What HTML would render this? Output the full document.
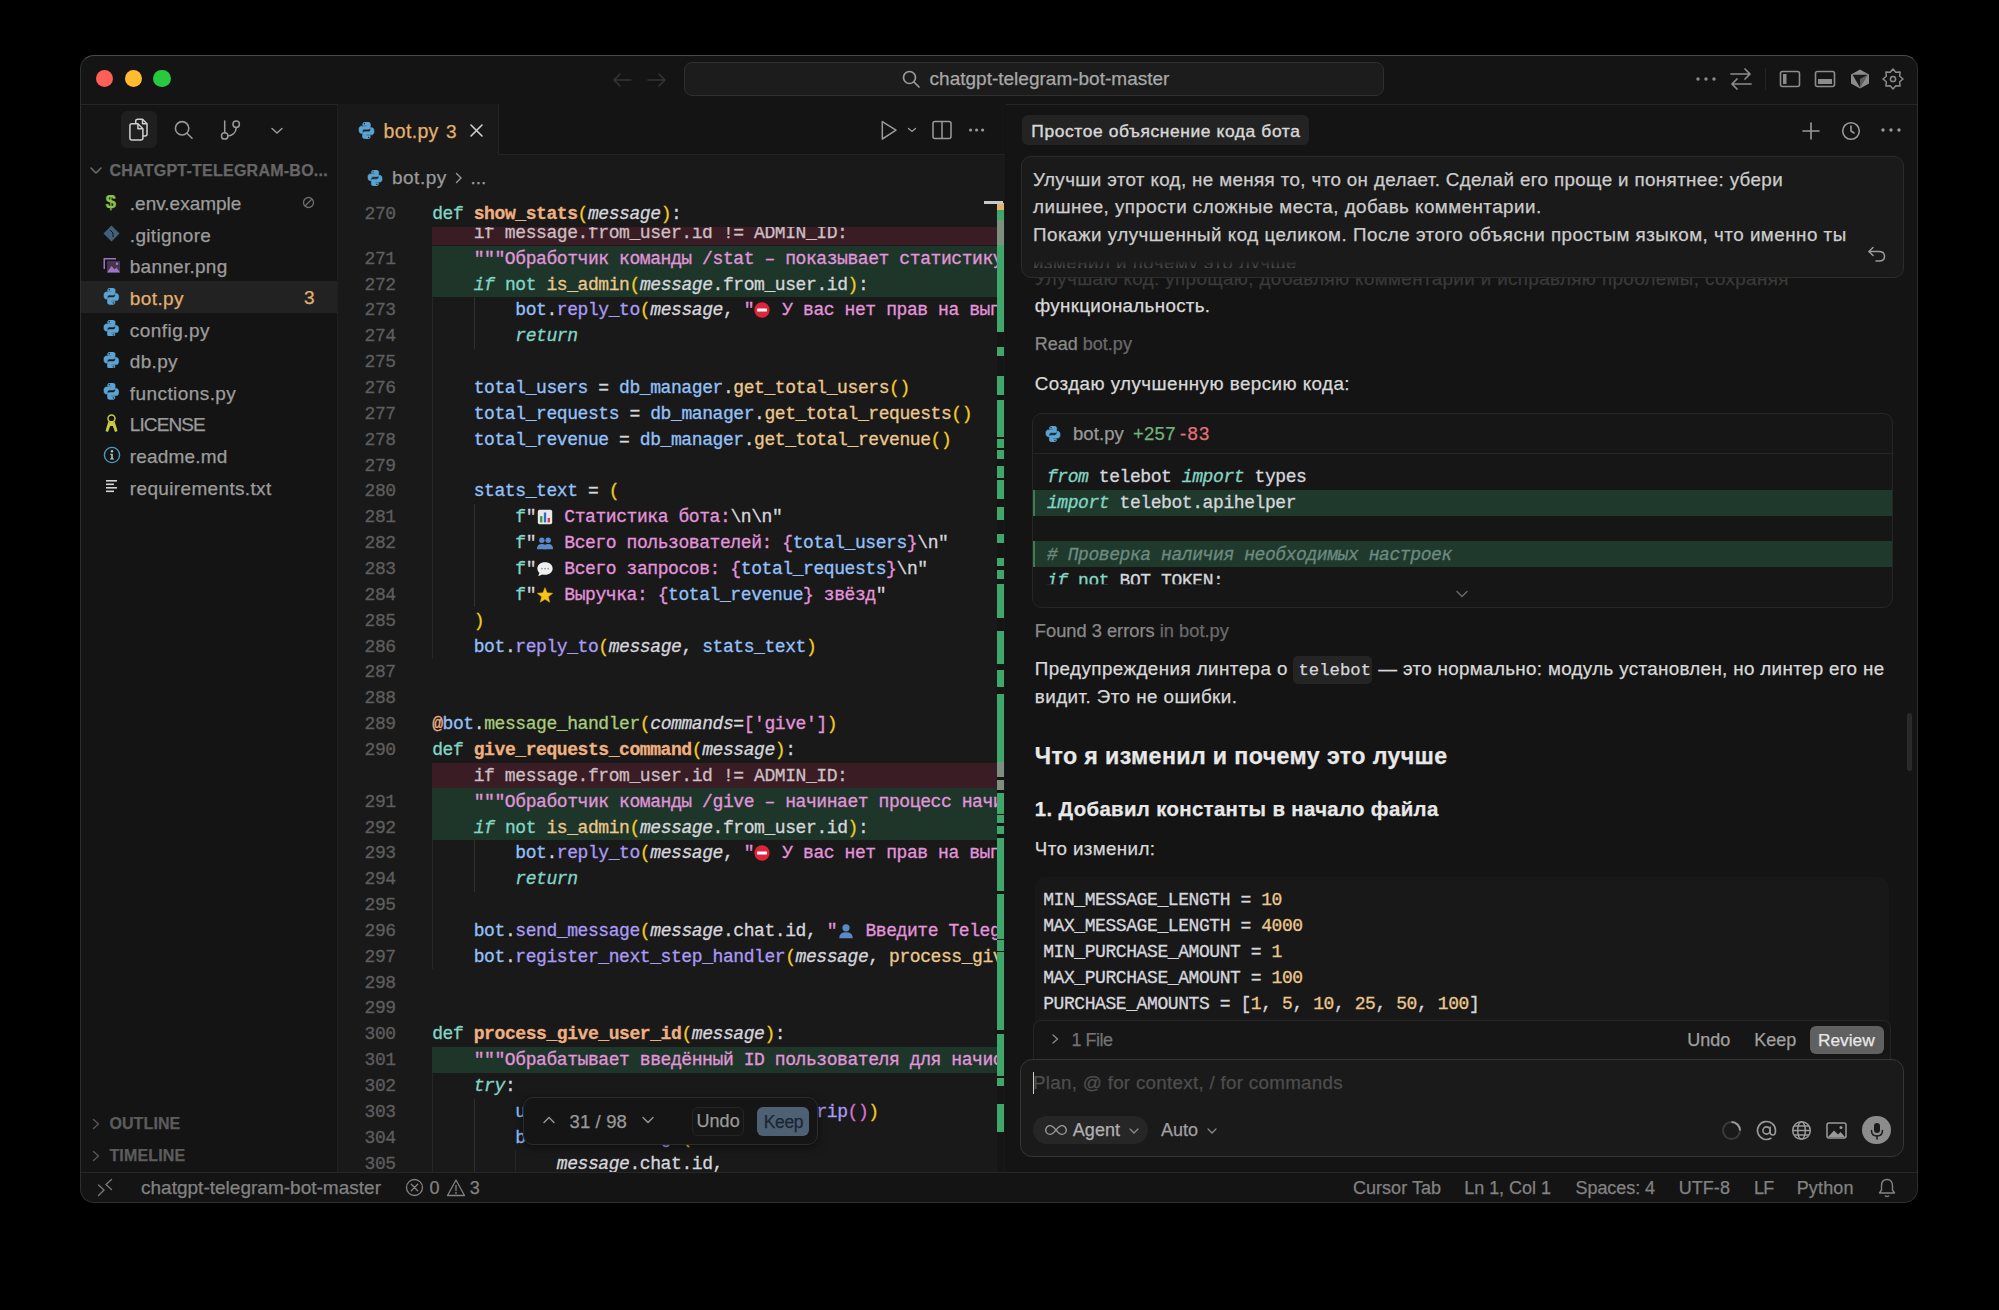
<!DOCTYPE html>
<html><head><meta charset="utf-8"><style>
*{margin:0;padding:0;box-sizing:border-box}
html,body{width:1999px;height:1310px;overflow:hidden;background:#000}
body{position:relative;font-family:"Liberation Sans",sans-serif}
div{-webkit-text-stroke:0.25px}
</style></head>
<body>
<div style="position:absolute;left:80.00px;top:55.00px;width:1838.00px;height:1148.00px;background:#141414;border-radius:14px;border:1px solid #2e2e2e;border-top-color:#4a4a4a"></div><div style="position:absolute;left:81.00px;top:103.50px;width:1836.00px;height:1.00px;background:#262626;"></div><div style="position:absolute;left:95.80px;top:69.90px;width:17.60px;height:17.60px;background:#fe5f57;border-radius:50%"></div><div style="position:absolute;left:124.70px;top:69.90px;width:17.60px;height:17.60px;background:#febc2e;border-radius:50%"></div><div style="position:absolute;left:153.40px;top:69.90px;width:17.60px;height:17.60px;background:#28c840;border-radius:50%"></div><svg style="position:absolute;left:610.00px;top:70.00px;" width="60" height="20" viewBox="0 0 60 20"><g stroke="#343434" stroke-width="1.6" fill="none" stroke-linecap="round" stroke-linejoin="round"><path d="M4 10 H21 M4 10 L10 4 M4 10 L10 16"/><path d="M38 10 H55 M55 10 L49 4 M55 10 L49 16"/></g></svg><div style="position:absolute;left:683.60px;top:61.60px;width:700.00px;height:34.00px;background:#1c1c1c;border:1px solid #2f2f2f;border-radius:8px"></div><svg style="position:absolute;left:901.00px;top:69.00px;" width="20" height="20" viewBox="0 0 20 20"><g stroke="#9a9a9a" stroke-width="1.7" fill="none" stroke-linecap="round"><circle cx="8.5" cy="8.5" r="6"/><path d="M13 13 L18 18"/></g></svg><div style="position:absolute;left:929.60px;top:65.35px;font-family:'Liberation Sans', sans-serif;font-size:19px;line-height:27px;color:#a8a8a8;font-weight:400;white-space:pre;letter-spacing:0.003px;">chatgpt-telegram-bot-master</div><svg style="position:absolute;left:1694.00px;top:70.00px;" width="24" height="18" viewBox="0 0 24 18"><g fill="#8c8c8c"><circle cx="4" cy="9" r="1.7"/><circle cx="12" cy="9" r="1.7"/><circle cx="20" cy="9" r="1.7"/></g></svg><svg style="position:absolute;left:1728.00px;top:66.00px;" width="26" height="26" viewBox="0 0 26 26"><g stroke="#8c8c8c" stroke-width="1.7" fill="none" stroke-linecap="round" stroke-linejoin="round"><path d="M3 8 H22 M17 3 L22 8 L17 13"/><path d="M23 18 H4 M9 13 L4 18 L9 23"/></g></svg><div style="position:absolute;left:1765.00px;top:68.00px;width:1.00px;height:22.00px;background:#242424;"></div><svg style="position:absolute;left:1779.00px;top:69.00px;" width="22" height="20" viewBox="0 0 22 20"><g stroke="#8c8c8c" stroke-width="1.6" fill="none"><rect x="1.5" y="2.5" width="19" height="15" rx="2"/></g><rect x="4" y="5" width="3.5" height="10" fill="#8c8c8c"/></svg><svg style="position:absolute;left:1813.60px;top:69.00px;" width="22" height="20" viewBox="0 0 22 20"><g stroke="#8c8c8c" stroke-width="1.6" fill="none"><rect x="1.5" y="2.5" width="19" height="15" rx="2"/></g><rect x="4" y="10" width="14" height="5" fill="#8c8c8c"/></svg><svg style="position:absolute;left:1849.00px;top:68.00px;" width="22" height="22" viewBox="0 0 22 22"><path d="M11 1.5 L20 6.5 V15.5 L11 20.5 L2 15.5 V6.5 Z" fill="#8c8c8c"/><path d="M3.5 6.8 L18.5 6.8 L11 19.5 Z" fill="#1a1a1a"/><path d="M11 19.5 L18.5 6.8 L11 11 Z" fill="#8c8c8c" opacity="0.6"/></svg><svg style="position:absolute;left:1881.70px;top:67.70px;" width="22" height="22" viewBox="0 0 22 22"><g stroke="#8c8c8c" stroke-width="1.5" fill="none" stroke-linejoin="round"><polygon points="11.00,1.00 13.76,4.35 18.07,3.93 17.65,8.24 21.00,11.00 17.65,13.76 18.07,18.07 13.76,17.65 11.00,21.00 8.24,17.65 3.93,18.07 4.35,13.76 1.00,11.00 4.35,8.24 3.93,3.93 8.24,4.35"/><circle cx="11" cy="11" r="2.6"/></g></svg><div style="position:absolute;left:336.50px;top:104.00px;width:1.00px;height:1068.40px;background:#242424;"></div><div style="position:absolute;left:120.80px;top:111.30px;width:36.00px;height:37.00px;background:#1f1f1f;border-radius:6px"></div><svg style="position:absolute;left:127.00px;top:117.00px;" width="24" height="26" viewBox="0 0 24 26"><g stroke="#cfcfcf" stroke-width="1.5" stroke-linejoin="round"><path d="M10.7 2.3 H15.5 L20 6.8 V17 Q20 19 18 19 H10.7 Q8.7 19 8.7 17 V4.3 Q8.7 2.3 10.7 2.3 Z" fill="none"/><path d="M15.5 2.3 V6.8 H20" fill="none"/><path d="M4.9 6.8 H10.9 L15.9 11.8 V21 Q15.9 23 13.9 23 H4.9 Q2.9 23 2.9 21 V8.8 Q2.9 6.8 4.9 6.8 Z" fill="#1f1f1f"/><path d="M10.9 6.8 V11.8 H15.9" fill="none"/></g></svg><svg style="position:absolute;left:173.00px;top:119.00px;" width="22" height="22" viewBox="0 0 22 22"><g stroke="#9a9a9a" stroke-width="1.6" fill="none" stroke-linecap="round"><circle cx="9.1" cy="9.3" r="6.7"/><path d="M14 14.2 L19 19.2"/></g></svg><svg style="position:absolute;left:219.00px;top:118.00px;" width="24" height="24" viewBox="0 0 24 24"><g stroke="#9a9a9a" stroke-width="1.5" fill="none" stroke-linecap="round"><path d="M5.7 3 V14.7"/><circle cx="5.7" cy="17.9" r="3.2"/><circle cx="17.2" cy="6.2" r="3.2"/><path d="M17.2 9.4 C17.2 14.5 13.5 17.9 8.9 17.9"/></g></svg><svg style="position:absolute;left:269.00px;top:124.50px;" width="16" height="12" viewBox="0 0 16 12"><path d="M3 3.5 L8 8 L13 3.5" stroke="#9a9a9a" stroke-width="1.5" fill="none" stroke-linecap="round" stroke-linejoin="round"/></svg><svg style="position:absolute;left:88.00px;top:164.00px;" width="16" height="14" viewBox="0 0 16 14"><path d="M3 4 L8 9 L13 4" stroke="#6e6e6e" stroke-width="1.5" fill="none" stroke-linecap="round" stroke-linejoin="round"/></svg><div style="position:absolute;left:109.50px;top:160.40px;font-family:'Liberation Sans', sans-serif;font-size:16px;line-height:22px;color:#666666;font-weight:700;white-space:pre;letter-spacing:0.244px;">CHATGPT-TELEGRAM-BO...</div><div style="position:absolute;left:129.80px;top:190.25px;font-family:'Liberation Sans', sans-serif;font-size:19px;line-height:27px;color:#9c9c9c;font-weight:400;white-space:pre;letter-spacing:-0.001px;">.env.example</div><div style="position:absolute;left:105.50px;top:188.45px;font-family:'Liberation Sans', sans-serif;font-size:19px;line-height:27px;color:#8dc149;font-weight:700;white-space:pre;">$</div><svg style="position:absolute;left:302.00px;top:195.80px;" width="13" height="13" viewBox="0 0 13 13"><g stroke="#6e6e6e" stroke-width="1.3" fill="none"><circle cx="6.5" cy="6.5" r="5"/><path d="M3 10 L10 3"/></g></svg><div style="position:absolute;left:129.80px;top:221.85px;font-family:'Liberation Sans', sans-serif;font-size:19px;line-height:27px;color:#9c9c9c;font-weight:400;white-space:pre;letter-spacing:0.323px;">.gitignore</div><svg style="position:absolute;left:103.00px;top:225.40px;" width="17" height="17" viewBox="0 0 17 17"><path d="M8.5 0.5 L16.5 8.5 L8.5 16.5 L0.5 8.5 Z" fill="#41607a" transform="translate(0,0)"/><path d="M7 5 L10 8 V12" stroke="#141414" stroke-width="1" fill="none"/></svg><div style="position:absolute;left:129.80px;top:253.45px;font-family:'Liberation Sans', sans-serif;font-size:19px;line-height:27px;color:#9c9c9c;font-weight:400;white-space:pre;letter-spacing:0.261px;">banner.png</div><svg style="position:absolute;left:103.00px;top:257.00px;" width="18" height="16" viewBox="0 0 18 16"><g fill="#a074c4"><path d="M0.5 1 H13 V2.5 H2 V12 H0.5 Z"/><path d="M4 4 H17 V15.5 H4 Z" opacity="0.35"/><path d="M4 15.5 L8.5 9 L11.5 12.5 L13.5 10.5 L17 15.5 Z"/><circle cx="14" cy="6.8" r="1.3"/></g></svg><div style="position:absolute;left:81.00px;top:281.30px;width:255.50px;height:31.60px;background:#222222;"></div><div style="position:absolute;left:304.00px;top:284.25px;font-family:'Liberation Sans', sans-serif;font-size:19px;line-height:27px;color:#e3b06f;font-weight:400;white-space:pre;">3</div><div style="position:absolute;left:129.80px;top:285.05px;font-family:'Liberation Sans', sans-serif;font-size:19px;line-height:27px;color:#e3b06f;font-weight:400;white-space:pre;letter-spacing:0.406px;">bot.py</div><svg style="position:absolute;left:103.20px;top:288.30px" width="16.6" height="16.6" viewBox="1.6 1 12.8 14"><g fill="#5aa3d2" stroke="#5aa3d2" stroke-width="0.5"><path d="M7.9 1C4.8 1 5 2.4 5 2.4V3.9h3v.5H3.8S1.8 4.2 1.8 7.3c0 3.1 1.8 3 1.8 3h1.1V8.8s-.1-1.8 1.8-1.8h3s1.7 0 1.7-1.7V2.6S11.4 1 7.9 1z"/><path d="M8.1 15c3.1 0 2.9-1.4 2.9-1.4v-1.5H8v-.5h4.2s2 .2 2-2.9-1.8-3-1.8-3h-1.1v1.5s.1 1.8-1.8 1.8h-3s-1.7 0-1.7 1.7v2.7S4.6 15 8.1 15z"/></g><circle cx="6.3" cy="2.4" r="0.55" fill="#141414"/><circle cx="9.7" cy="13.6" r="0.55" fill="#141414"/></svg><div style="position:absolute;left:129.80px;top:316.65px;font-family:'Liberation Sans', sans-serif;font-size:19px;line-height:27px;color:#9c9c9c;font-weight:400;white-space:pre;letter-spacing:0.450px;">config.py</div><svg style="position:absolute;left:103.20px;top:319.90px" width="16.6" height="16.6" viewBox="1.6 1 12.8 14"><g fill="#5aa3d2" stroke="#5aa3d2" stroke-width="0.5"><path d="M7.9 1C4.8 1 5 2.4 5 2.4V3.9h3v.5H3.8S1.8 4.2 1.8 7.3c0 3.1 1.8 3 1.8 3h1.1V8.8s-.1-1.8 1.8-1.8h3s1.7 0 1.7-1.7V2.6S11.4 1 7.9 1z"/><path d="M8.1 15c3.1 0 2.9-1.4 2.9-1.4v-1.5H8v-.5h4.2s2 .2 2-2.9-1.8-3-1.8-3h-1.1v1.5s.1 1.8-1.8 1.8h-3s-1.7 0-1.7 1.7v2.7S4.6 15 8.1 15z"/></g><circle cx="6.3" cy="2.4" r="0.55" fill="#141414"/><circle cx="9.7" cy="13.6" r="0.55" fill="#141414"/></svg><div style="position:absolute;left:129.80px;top:348.25px;font-family:'Liberation Sans', sans-serif;font-size:19px;line-height:27px;color:#9c9c9c;font-weight:400;white-space:pre;letter-spacing:0.323px;">db.py</div><svg style="position:absolute;left:103.20px;top:351.50px" width="16.6" height="16.6" viewBox="1.6 1 12.8 14"><g fill="#5aa3d2" stroke="#5aa3d2" stroke-width="0.5"><path d="M7.9 1C4.8 1 5 2.4 5 2.4V3.9h3v.5H3.8S1.8 4.2 1.8 7.3c0 3.1 1.8 3 1.8 3h1.1V8.8s-.1-1.8 1.8-1.8h3s1.7 0 1.7-1.7V2.6S11.4 1 7.9 1z"/><path d="M8.1 15c3.1 0 2.9-1.4 2.9-1.4v-1.5H8v-.5h4.2s2 .2 2-2.9-1.8-3-1.8-3h-1.1v1.5s.1 1.8-1.8 1.8h-3s-1.7 0-1.7 1.7v2.7S4.6 15 8.1 15z"/></g><circle cx="6.3" cy="2.4" r="0.55" fill="#141414"/><circle cx="9.7" cy="13.6" r="0.55" fill="#141414"/></svg><div style="position:absolute;left:129.80px;top:379.85px;font-family:'Liberation Sans', sans-serif;font-size:19px;line-height:27px;color:#9c9c9c;font-weight:400;white-space:pre;letter-spacing:0.424px;">functions.py</div><svg style="position:absolute;left:103.20px;top:383.10px" width="16.6" height="16.6" viewBox="1.6 1 12.8 14"><g fill="#5aa3d2" stroke="#5aa3d2" stroke-width="0.5"><path d="M7.9 1C4.8 1 5 2.4 5 2.4V3.9h3v.5H3.8S1.8 4.2 1.8 7.3c0 3.1 1.8 3 1.8 3h1.1V8.8s-.1-1.8 1.8-1.8h3s1.7 0 1.7-1.7V2.6S11.4 1 7.9 1z"/><path d="M8.1 15c3.1 0 2.9-1.4 2.9-1.4v-1.5H8v-.5h4.2s2 .2 2-2.9-1.8-3-1.8-3h-1.1v1.5s.1 1.8-1.8 1.8h-3s-1.7 0-1.7 1.7v2.7S4.6 15 8.1 15z"/></g><circle cx="6.3" cy="2.4" r="0.55" fill="#141414"/><circle cx="9.7" cy="13.6" r="0.55" fill="#141414"/></svg><div style="position:absolute;left:129.80px;top:411.45px;font-family:'Liberation Sans', sans-serif;font-size:19px;line-height:27px;color:#9c9c9c;font-weight:400;white-space:pre;letter-spacing:-0.902px;">LICENSE</div><svg style="position:absolute;left:104.00px;top:414.00px;" width="15" height="19" viewBox="0 0 15 19"><g fill="#cbcb41"><circle cx="7.5" cy="4.5" r="3.5" fill="none" stroke="#cbcb41" stroke-width="1.5"/><path d="M4.5 7 L1.5 17 L4 18 L6.5 11 Z"/><path d="M10.5 7 L13.5 17 L11 18 L8.5 11 Z"/><path d="M5 7 H10 L9 12 H6 Z"/></g></svg><div style="position:absolute;left:129.80px;top:443.05px;font-family:'Liberation Sans', sans-serif;font-size:19px;line-height:27px;color:#9c9c9c;font-weight:400;white-space:pre;letter-spacing:0.177px;">readme.md</div><svg style="position:absolute;left:102.50px;top:445.60px;" width="18" height="18" viewBox="0 0 18 18"><circle cx="9" cy="9" r="7.6" stroke="#519aba" stroke-width="1.4" fill="none"/><circle cx="9" cy="5.3" r="1.2" fill="#a8c8e0"/><path d="M7 7.8 H9.8 V12.6 H11 V13.6 H7 V12.6 H8.2 V8.8 H7 Z" fill="#a8c8e0"/></svg><div style="position:absolute;left:129.80px;top:474.65px;font-family:'Liberation Sans', sans-serif;font-size:19px;line-height:27px;color:#9c9c9c;font-weight:400;white-space:pre;letter-spacing:0.348px;">requirements.txt</div><svg style="position:absolute;left:105.00px;top:478.20px;" width="14" height="16" viewBox="0 0 14 16"><g fill="#d4d4d4"><rect x="1" y="2" width="11" height="1.6"/><rect x="1" y="5.5" width="8" height="1.6"/><rect x="1" y="9" width="11" height="1.6"/><rect x="1" y="12.5" width="8" height="1.6"/></g></svg><svg style="position:absolute;left:90.00px;top:1117.00px;" width="12" height="14" viewBox="0 0 12 14"><path d="M3.5 2.5 L8.5 7 L3.5 11.5" stroke="#585858" stroke-width="1.4" fill="none" stroke-linecap="round" stroke-linejoin="round"/></svg><div style="position:absolute;left:109.40px;top:1113.40px;font-family:'Liberation Sans', sans-serif;font-size:16px;line-height:22px;color:#5c5c5c;font-weight:700;white-space:pre;letter-spacing:0.112px;">OUTLINE</div><svg style="position:absolute;left:90.00px;top:1148.70px;" width="12" height="14" viewBox="0 0 12 14"><path d="M3.5 2.5 L8.5 7 L3.5 11.5" stroke="#585858" stroke-width="1.4" fill="none" stroke-linecap="round" stroke-linejoin="round"/></svg><div style="position:absolute;left:109.40px;top:1145.10px;font-family:'Liberation Sans', sans-serif;font-size:16px;line-height:22px;color:#5c5c5c;font-weight:700;white-space:pre;letter-spacing:0.166px;">TIMELINE</div><div style="position:absolute;left:337.00px;top:104.00px;width:668.00px;height:1068.40px;background:#191919;"></div><div style="position:absolute;left:336.60px;top:104.00px;width:1.60px;height:1068.40px;background:#202020;"></div><div style="position:absolute;left:498.00px;top:104.00px;width:507.00px;height:50.00px;background:#141414;"></div><div style="position:absolute;left:498.00px;top:153.50px;width:507.00px;height:1.00px;background:#242424;"></div><div style="position:absolute;left:497.50px;top:104.00px;width:1.00px;height:50.00px;background:#242424;"></div><svg style="position:absolute;left:357.50px;top:122.00px" width="17" height="17" viewBox="1.6 1 12.8 14"><g fill="#5aa3d2" stroke="#5aa3d2" stroke-width="0.5"><path d="M7.9 1C4.8 1 5 2.4 5 2.4V3.9h3v.5H3.8S1.8 4.2 1.8 7.3c0 3.1 1.8 3 1.8 3h1.1V8.8s-.1-1.8 1.8-1.8h3s1.7 0 1.7-1.7V2.6S11.4 1 7.9 1z"/><path d="M8.1 15c3.1 0 2.9-1.4 2.9-1.4v-1.5H8v-.5h4.2s2 .2 2-2.9-1.8-3-1.8-3h-1.1v1.5s.1 1.8-1.8 1.8h-3s-1.7 0-1.7 1.7v2.7S4.6 15 8.1 15z"/></g><circle cx="6.3" cy="2.4" r="0.55" fill="#141414"/><circle cx="9.7" cy="13.6" r="0.55" fill="#141414"/></svg><div style="position:absolute;left:383.50px;top:118.17px;font-family:'Liberation Sans', sans-serif;font-size:19.5px;line-height:27px;color:#e3b06f;font-weight:400;white-space:pre;letter-spacing:0.346px;">bot.py</div><div style="position:absolute;left:446.00px;top:118.35px;font-family:'Liberation Sans', sans-serif;font-size:19px;line-height:27px;color:#e3b06f;font-weight:400;white-space:pre;">3</div><svg style="position:absolute;left:468.00px;top:122.00px;" width="17" height="17" viewBox="0 0 17 17"><path d="M3 3 L14 14 M14 3 L3 14" stroke="#d0d0d0" stroke-width="1.6" stroke-linecap="round"/></svg><svg style="position:absolute;left:877.00px;top:119.00px;" width="22" height="22" viewBox="0 0 22 22"><path d="M5.3 2.6 L19 11.2 L5.3 20 Z" stroke="#9a9a9a" stroke-width="1.5" fill="none" stroke-linejoin="round"/></svg><svg style="position:absolute;left:906.00px;top:125.00px;" width="12" height="10" viewBox="0 0 12 10"><path d="M2.5 3.5 L6 6.5 L9.5 3.5" stroke="#9a9a9a" stroke-width="1.3" fill="none" stroke-linecap="round"/></svg><svg style="position:absolute;left:931.00px;top:119.00px;" width="22" height="22" viewBox="0 0 22 22"><g stroke="#9a9a9a" stroke-width="1.5" fill="none"><rect x="2" y="2.5" width="18" height="17" rx="2"/><path d="M11 2.5 V19.5"/></g></svg><svg style="position:absolute;left:965.00px;top:122.00px;" width="24" height="16" viewBox="0 0 24 16"><g fill="#9a9a9a"><circle cx="5.6" cy="8" r="1.6"/><circle cx="11.6" cy="8" r="1.6"/><circle cx="17.6" cy="8" r="1.6"/></g></svg><svg style="position:absolute;left:366.50px;top:170.00px" width="16" height="16" viewBox="1.6 1 12.8 14"><g fill="#5aa3d2" stroke="#5aa3d2" stroke-width="0.5"><path d="M7.9 1C4.8 1 5 2.4 5 2.4V3.9h3v.5H3.8S1.8 4.2 1.8 7.3c0 3.1 1.8 3 1.8 3h1.1V8.8s-.1-1.8 1.8-1.8h3s1.7 0 1.7-1.7V2.6S11.4 1 7.9 1z"/><path d="M8.1 15c3.1 0 2.9-1.4 2.9-1.4v-1.5H8v-.5h4.2s2 .2 2-2.9-1.8-3-1.8-3h-1.1v1.5s.1 1.8-1.8 1.8h-3s-1.7 0-1.7 1.7v2.7S4.6 15 8.1 15z"/></g><circle cx="6.3" cy="2.4" r="0.55" fill="#141414"/><circle cx="9.7" cy="13.6" r="0.55" fill="#141414"/></svg><div style="position:absolute;left:392.00px;top:163.85px;font-family:'Liberation Sans', sans-serif;font-size:19px;line-height:27px;color:#9a9a9a;font-weight:400;white-space:pre;letter-spacing:0.489px;">bot.py</div><svg style="position:absolute;left:453.00px;top:170.00px;" width="12" height="16" viewBox="0 0 12 16"><path d="M3.5 3.5 L8 8 L3.5 12.5" stroke="#9a9a9a" stroke-width="1.4" fill="none" stroke-linecap="round"/></svg><div style="position:absolute;left:470.50px;top:163.85px;font-family:'Liberation Sans', sans-serif;font-size:19px;line-height:27px;color:#9a9a9a;font-weight:400;white-space:pre;">...</div><div style="position:absolute;left:364.50px;top:246.79px;font-family:'Liberation Mono', monospace;font-size:18.0px;line-height:25.85px;color:#5e5e5e;font-weight:400;white-space:pre;letter-spacing:-0.420px;-webkit-text-stroke:0.3px">271</div><div style="position:absolute;left:364.50px;top:272.64px;font-family:'Liberation Mono', monospace;font-size:18.0px;line-height:25.85px;color:#5e5e5e;font-weight:400;white-space:pre;letter-spacing:-0.420px;-webkit-text-stroke:0.3px">272</div><div style="position:absolute;left:364.50px;top:298.49px;font-family:'Liberation Mono', monospace;font-size:18.0px;line-height:25.85px;color:#5e5e5e;font-weight:400;white-space:pre;letter-spacing:-0.420px;-webkit-text-stroke:0.3px">273</div><div style="position:absolute;left:364.50px;top:324.34px;font-family:'Liberation Mono', monospace;font-size:18.0px;line-height:25.85px;color:#5e5e5e;font-weight:400;white-space:pre;letter-spacing:-0.420px;-webkit-text-stroke:0.3px">274</div><div style="position:absolute;left:364.50px;top:350.19px;font-family:'Liberation Mono', monospace;font-size:18.0px;line-height:25.85px;color:#5e5e5e;font-weight:400;white-space:pre;letter-spacing:-0.420px;-webkit-text-stroke:0.3px">275</div><div style="position:absolute;left:364.50px;top:376.04px;font-family:'Liberation Mono', monospace;font-size:18.0px;line-height:25.85px;color:#5e5e5e;font-weight:400;white-space:pre;letter-spacing:-0.420px;-webkit-text-stroke:0.3px">276</div><div style="position:absolute;left:364.50px;top:401.89px;font-family:'Liberation Mono', monospace;font-size:18.0px;line-height:25.85px;color:#5e5e5e;font-weight:400;white-space:pre;letter-spacing:-0.420px;-webkit-text-stroke:0.3px">277</div><div style="position:absolute;left:364.50px;top:427.75px;font-family:'Liberation Mono', monospace;font-size:18.0px;line-height:25.85px;color:#5e5e5e;font-weight:400;white-space:pre;letter-spacing:-0.420px;-webkit-text-stroke:0.3px">278</div><div style="position:absolute;left:364.50px;top:453.59px;font-family:'Liberation Mono', monospace;font-size:18.0px;line-height:25.85px;color:#5e5e5e;font-weight:400;white-space:pre;letter-spacing:-0.420px;-webkit-text-stroke:0.3px">279</div><div style="position:absolute;left:364.50px;top:479.44px;font-family:'Liberation Mono', monospace;font-size:18.0px;line-height:25.85px;color:#5e5e5e;font-weight:400;white-space:pre;letter-spacing:-0.420px;-webkit-text-stroke:0.3px">280</div><div style="position:absolute;left:364.50px;top:505.29px;font-family:'Liberation Mono', monospace;font-size:18.0px;line-height:25.85px;color:#5e5e5e;font-weight:400;white-space:pre;letter-spacing:-0.420px;-webkit-text-stroke:0.3px">281</div><div style="position:absolute;left:364.50px;top:531.15px;font-family:'Liberation Mono', monospace;font-size:18.0px;line-height:25.85px;color:#5e5e5e;font-weight:400;white-space:pre;letter-spacing:-0.420px;-webkit-text-stroke:0.3px">282</div><div style="position:absolute;left:364.50px;top:557.00px;font-family:'Liberation Mono', monospace;font-size:18.0px;line-height:25.85px;color:#5e5e5e;font-weight:400;white-space:pre;letter-spacing:-0.420px;-webkit-text-stroke:0.3px">283</div><div style="position:absolute;left:364.50px;top:582.85px;font-family:'Liberation Mono', monospace;font-size:18.0px;line-height:25.85px;color:#5e5e5e;font-weight:400;white-space:pre;letter-spacing:-0.420px;-webkit-text-stroke:0.3px">284</div><div style="position:absolute;left:364.50px;top:608.70px;font-family:'Liberation Mono', monospace;font-size:18.0px;line-height:25.85px;color:#5e5e5e;font-weight:400;white-space:pre;letter-spacing:-0.420px;-webkit-text-stroke:0.3px">285</div><div style="position:absolute;left:364.50px;top:634.55px;font-family:'Liberation Mono', monospace;font-size:18.0px;line-height:25.85px;color:#5e5e5e;font-weight:400;white-space:pre;letter-spacing:-0.420px;-webkit-text-stroke:0.3px">286</div><div style="position:absolute;left:364.50px;top:660.40px;font-family:'Liberation Mono', monospace;font-size:18.0px;line-height:25.85px;color:#5e5e5e;font-weight:400;white-space:pre;letter-spacing:-0.420px;-webkit-text-stroke:0.3px">287</div><div style="position:absolute;left:364.50px;top:686.25px;font-family:'Liberation Mono', monospace;font-size:18.0px;line-height:25.85px;color:#5e5e5e;font-weight:400;white-space:pre;letter-spacing:-0.420px;-webkit-text-stroke:0.3px">288</div><div style="position:absolute;left:364.50px;top:712.10px;font-family:'Liberation Mono', monospace;font-size:18.0px;line-height:25.85px;color:#5e5e5e;font-weight:400;white-space:pre;letter-spacing:-0.420px;-webkit-text-stroke:0.3px">289</div><div style="position:absolute;left:364.50px;top:737.95px;font-family:'Liberation Mono', monospace;font-size:18.0px;line-height:25.85px;color:#5e5e5e;font-weight:400;white-space:pre;letter-spacing:-0.420px;-webkit-text-stroke:0.3px">290</div><div style="position:absolute;left:364.50px;top:789.65px;font-family:'Liberation Mono', monospace;font-size:18.0px;line-height:25.85px;color:#5e5e5e;font-weight:400;white-space:pre;letter-spacing:-0.420px;-webkit-text-stroke:0.3px">291</div><div style="position:absolute;left:364.50px;top:815.50px;font-family:'Liberation Mono', monospace;font-size:18.0px;line-height:25.85px;color:#5e5e5e;font-weight:400;white-space:pre;letter-spacing:-0.420px;-webkit-text-stroke:0.3px">292</div><div style="position:absolute;left:364.50px;top:841.35px;font-family:'Liberation Mono', monospace;font-size:18.0px;line-height:25.85px;color:#5e5e5e;font-weight:400;white-space:pre;letter-spacing:-0.420px;-webkit-text-stroke:0.3px">293</div><div style="position:absolute;left:364.50px;top:867.20px;font-family:'Liberation Mono', monospace;font-size:18.0px;line-height:25.85px;color:#5e5e5e;font-weight:400;white-space:pre;letter-spacing:-0.420px;-webkit-text-stroke:0.3px">294</div><div style="position:absolute;left:364.50px;top:893.05px;font-family:'Liberation Mono', monospace;font-size:18.0px;line-height:25.85px;color:#5e5e5e;font-weight:400;white-space:pre;letter-spacing:-0.420px;-webkit-text-stroke:0.3px">295</div><div style="position:absolute;left:364.50px;top:918.90px;font-family:'Liberation Mono', monospace;font-size:18.0px;line-height:25.85px;color:#5e5e5e;font-weight:400;white-space:pre;letter-spacing:-0.420px;-webkit-text-stroke:0.3px">296</div><div style="position:absolute;left:364.50px;top:944.75px;font-family:'Liberation Mono', monospace;font-size:18.0px;line-height:25.85px;color:#5e5e5e;font-weight:400;white-space:pre;letter-spacing:-0.420px;-webkit-text-stroke:0.3px">297</div><div style="position:absolute;left:364.50px;top:970.60px;font-family:'Liberation Mono', monospace;font-size:18.0px;line-height:25.85px;color:#5e5e5e;font-weight:400;white-space:pre;letter-spacing:-0.420px;-webkit-text-stroke:0.3px">298</div><div style="position:absolute;left:364.50px;top:996.45px;font-family:'Liberation Mono', monospace;font-size:18.0px;line-height:25.85px;color:#5e5e5e;font-weight:400;white-space:pre;letter-spacing:-0.420px;-webkit-text-stroke:0.3px">299</div><div style="position:absolute;left:364.50px;top:1022.30px;font-family:'Liberation Mono', monospace;font-size:18.0px;line-height:25.85px;color:#5e5e5e;font-weight:400;white-space:pre;letter-spacing:-0.420px;-webkit-text-stroke:0.3px">300</div><div style="position:absolute;left:364.50px;top:1048.14px;font-family:'Liberation Mono', monospace;font-size:18.0px;line-height:25.85px;color:#5e5e5e;font-weight:400;white-space:pre;letter-spacing:-0.420px;-webkit-text-stroke:0.3px">301</div><div style="position:absolute;left:364.50px;top:1074.00px;font-family:'Liberation Mono', monospace;font-size:18.0px;line-height:25.85px;color:#5e5e5e;font-weight:400;white-space:pre;letter-spacing:-0.420px;-webkit-text-stroke:0.3px">302</div><div style="position:absolute;left:364.50px;top:1099.85px;font-family:'Liberation Mono', monospace;font-size:18.0px;line-height:25.85px;color:#5e5e5e;font-weight:400;white-space:pre;letter-spacing:-0.420px;-webkit-text-stroke:0.3px">303</div><div style="position:absolute;left:364.50px;top:1125.70px;font-family:'Liberation Mono', monospace;font-size:18.0px;line-height:25.85px;color:#5e5e5e;font-weight:400;white-space:pre;letter-spacing:-0.420px;-webkit-text-stroke:0.3px">304</div><div style="position:absolute;left:364.50px;top:1151.55px;font-family:'Liberation Mono', monospace;font-size:18.0px;line-height:25.85px;color:#5e5e5e;font-weight:400;white-space:pre;letter-spacing:-0.420px;-webkit-text-stroke:0.3px">305</div><div style="position:absolute;left:0;top:0;width:997px;height:1172px;overflow:hidden;clip-path:inset(201px 0 0 420px)"><div style="position:absolute;left:432.20px;top:219.65px;width:565.00px;height:25.85px;background:#3a1c25;"></div><div style="position:absolute;left:432.20px;top:220.94px;font-family:'Liberation Mono', monospace;font-size:18.0px;line-height:25.85px;color:#d6d6dd;font-weight:400;white-space:pre;letter-spacing:-0.420px;-webkit-text-stroke:0.3px;"><span style="color:#d6d6dd">    </span><span style="color:#cdbfc3">if message.from_user.id != ADMIN_ID:</span></div><div style="position:absolute;left:515.24px;top:1150.25px;width:1.00px;height:25.85px;background:#262626;"></div><div style="position:absolute;left:473.72px;top:1150.25px;width:1.00px;height:25.85px;background:#303030;"></div><div style="position:absolute;left:432.20px;top:1150.25px;width:1.00px;height:25.85px;background:#262626;"></div><div style="position:absolute;left:473.72px;top:1124.40px;width:1.00px;height:25.85px;background:#303030;"></div><div style="position:absolute;left:432.20px;top:1124.40px;width:1.00px;height:25.85px;background:#262626;"></div><div style="position:absolute;left:473.72px;top:1098.55px;width:1.00px;height:25.85px;background:#303030;"></div><div style="position:absolute;left:432.20px;top:1098.55px;width:1.00px;height:25.85px;background:#262626;"></div><div style="position:absolute;left:432.20px;top:1072.70px;width:1.00px;height:25.85px;background:#262626;"></div><div style="position:absolute;left:432.20px;top:1046.85px;width:1.00px;height:25.85px;background:#262626;"></div><div style="position:absolute;left:432.20px;top:943.45px;width:1.00px;height:25.85px;background:#262626;"></div><div style="position:absolute;left:432.20px;top:917.60px;width:1.00px;height:25.85px;background:#262626;"></div><div style="position:absolute;left:432.20px;top:891.75px;width:1.00px;height:25.85px;background:#262626;"></div><div style="position:absolute;left:473.72px;top:865.90px;width:1.00px;height:25.85px;background:#303030;"></div><div style="position:absolute;left:432.20px;top:865.90px;width:1.00px;height:25.85px;background:#262626;"></div><div style="position:absolute;left:473.72px;top:840.05px;width:1.00px;height:25.85px;background:#303030;"></div><div style="position:absolute;left:432.20px;top:840.05px;width:1.00px;height:25.85px;background:#262626;"></div><div style="position:absolute;left:432.20px;top:814.20px;width:1.00px;height:25.85px;background:#262626;"></div><div style="position:absolute;left:432.20px;top:788.35px;width:1.00px;height:25.85px;background:#262626;"></div><div style="position:absolute;left:432.20px;top:633.25px;width:1.00px;height:25.85px;background:#262626;"></div><div style="position:absolute;left:432.20px;top:607.40px;width:1.00px;height:25.85px;background:#262626;"></div><div style="position:absolute;left:473.72px;top:581.55px;width:1.00px;height:25.85px;background:#303030;"></div><div style="position:absolute;left:432.20px;top:581.55px;width:1.00px;height:25.85px;background:#262626;"></div><div style="position:absolute;left:473.72px;top:555.70px;width:1.00px;height:25.85px;background:#303030;"></div><div style="position:absolute;left:432.20px;top:555.70px;width:1.00px;height:25.85px;background:#262626;"></div><div style="position:absolute;left:473.72px;top:529.85px;width:1.00px;height:25.85px;background:#303030;"></div><div style="position:absolute;left:432.20px;top:529.85px;width:1.00px;height:25.85px;background:#262626;"></div><div style="position:absolute;left:473.72px;top:504.00px;width:1.00px;height:25.85px;background:#303030;"></div><div style="position:absolute;left:432.20px;top:504.00px;width:1.00px;height:25.85px;background:#262626;"></div><div style="position:absolute;left:432.20px;top:478.15px;width:1.00px;height:25.85px;background:#262626;"></div><div style="position:absolute;left:432.20px;top:452.30px;width:1.00px;height:25.85px;background:#262626;"></div><div style="position:absolute;left:432.20px;top:426.45px;width:1.00px;height:25.85px;background:#262626;"></div><div style="position:absolute;left:432.20px;top:400.60px;width:1.00px;height:25.85px;background:#262626;"></div><div style="position:absolute;left:432.20px;top:374.75px;width:1.00px;height:25.85px;background:#262626;"></div><div style="position:absolute;left:432.20px;top:348.90px;width:1.00px;height:25.85px;background:#262626;"></div><div style="position:absolute;left:473.72px;top:323.05px;width:1.00px;height:25.85px;background:#303030;"></div><div style="position:absolute;left:432.20px;top:323.05px;width:1.00px;height:25.85px;background:#262626;"></div><div style="position:absolute;left:473.72px;top:297.20px;width:1.00px;height:25.85px;background:#303030;"></div><div style="position:absolute;left:432.20px;top:297.20px;width:1.00px;height:25.85px;background:#262626;"></div><div style="position:absolute;left:432.20px;top:271.35px;width:1.00px;height:25.85px;background:#262626;"></div><div style="position:absolute;left:432.20px;top:245.50px;width:1.00px;height:25.85px;background:#262626;"></div><div style="position:absolute;left:432.20px;top:245.50px;width:565.00px;height:25.85px;background:#1e362a;"></div><div style="position:absolute;left:432.20px;top:246.79px;font-family:'Liberation Mono', monospace;font-size:18.0px;line-height:25.85px;color:#d6d6dd;font-weight:400;white-space:pre;letter-spacing:-0.420px;-webkit-text-stroke:0.3px;"><span style="color:#d6d6dd">    </span><span style="color:#e394dc">"""Обработчик команды /stat – показывает статистику бота"""</span></div><div style="position:absolute;left:432.20px;top:271.35px;width:565.00px;height:25.85px;background:#1e362a;"></div><div style="position:absolute;left:432.20px;top:272.64px;font-family:'Liberation Mono', monospace;font-size:18.0px;line-height:25.85px;color:#d6d6dd;font-weight:400;white-space:pre;letter-spacing:-0.420px;-webkit-text-stroke:0.3px;"><span style="color:#d6d6dd">    </span><span style="color:#83d6c5;font-style:italic">if</span><span style="color:#d6d6dd"> </span><span style="color:#83d6c5">not</span><span style="color:#d6d6dd"> </span><span style="color:#ebc88d">is_admin</span><span style="color:#f2cc24">(</span><span style="color:#d6d6dd;font-style:italic">message</span><span style="color:#d6d6dd">.from_user.id</span><span style="color:#f2cc24">)</span><span style="color:#d6d6dd">:</span></div><div style="position:absolute;left:432.20px;top:298.49px;font-family:'Liberation Mono', monospace;font-size:18.0px;line-height:25.85px;color:#d6d6dd;font-weight:400;white-space:pre;letter-spacing:-0.420px;-webkit-text-stroke:0.3px;"><span style="color:#d6d6dd">        </span><span style="color:#94c1fa">bot</span><span style="color:#d6d6dd">.</span><span style="color:#aa9bf5">reply_to</span><span style="color:#f2cc24">(</span><span style="color:#d6d6dd;font-style:italic">message</span><span style="color:#d6d6dd">, </span><span style="color:#e394dc">"</span><span style="display:inline-block;width:17.85px"></span><span style="color:#e394dc"> У вас нет прав на выполнение этой команды"</span><span style="color:#f2cc24">)</span></div><svg style="position:absolute;left:753.48px;top:301.20px" width="18" height="18" viewBox="0 0 20 20"><circle cx="10" cy="10" r="8.5" fill="#e0243a"/><rect x="4.5" y="8.2" width="11" height="3.6" rx="0.8" fill="#fff"/></svg><div style="position:absolute;left:432.20px;top:324.34px;font-family:'Liberation Mono', monospace;font-size:18.0px;line-height:25.85px;color:#d6d6dd;font-weight:400;white-space:pre;letter-spacing:-0.420px;-webkit-text-stroke:0.3px;"><span style="color:#d6d6dd">        </span><span style="color:#83d6c5;font-style:italic">return</span></div><div style="position:absolute;left:432.20px;top:350.19px;font-family:'Liberation Mono', monospace;font-size:18.0px;line-height:25.85px;color:#d6d6dd;font-weight:400;white-space:pre;letter-spacing:-0.420px;-webkit-text-stroke:0.3px;"></div><div style="position:absolute;left:432.20px;top:376.04px;font-family:'Liberation Mono', monospace;font-size:18.0px;line-height:25.85px;color:#d6d6dd;font-weight:400;white-space:pre;letter-spacing:-0.420px;-webkit-text-stroke:0.3px;"><span style="color:#d6d6dd">    </span><span style="color:#94c1fa">total_users</span><span style="color:#d6d6dd"> = </span><span style="color:#94c1fa">db_manager</span><span style="color:#d6d6dd">.</span><span style="color:#ebc88d">get_total_users</span><span style="color:#f2cc24">()</span></div><div style="position:absolute;left:432.20px;top:401.89px;font-family:'Liberation Mono', monospace;font-size:18.0px;line-height:25.85px;color:#d6d6dd;font-weight:400;white-space:pre;letter-spacing:-0.420px;-webkit-text-stroke:0.3px;"><span style="color:#d6d6dd">    </span><span style="color:#94c1fa">total_requests</span><span style="color:#d6d6dd"> = </span><span style="color:#94c1fa">db_manager</span><span style="color:#d6d6dd">.</span><span style="color:#ebc88d">get_total_requests</span><span style="color:#f2cc24">()</span></div><div style="position:absolute;left:432.20px;top:427.75px;font-family:'Liberation Mono', monospace;font-size:18.0px;line-height:25.85px;color:#d6d6dd;font-weight:400;white-space:pre;letter-spacing:-0.420px;-webkit-text-stroke:0.3px;"><span style="color:#d6d6dd">    </span><span style="color:#94c1fa">total_revenue</span><span style="color:#d6d6dd"> = </span><span style="color:#94c1fa">db_manager</span><span style="color:#d6d6dd">.</span><span style="color:#ebc88d">get_total_revenue</span><span style="color:#f2cc24">()</span></div><div style="position:absolute;left:432.20px;top:453.59px;font-family:'Liberation Mono', monospace;font-size:18.0px;line-height:25.85px;color:#d6d6dd;font-weight:400;white-space:pre;letter-spacing:-0.420px;-webkit-text-stroke:0.3px;"></div><div style="position:absolute;left:432.20px;top:479.44px;font-family:'Liberation Mono', monospace;font-size:18.0px;line-height:25.85px;color:#d6d6dd;font-weight:400;white-space:pre;letter-spacing:-0.420px;-webkit-text-stroke:0.3px;"><span style="color:#d6d6dd">    </span><span style="color:#94c1fa">stats_text</span><span style="color:#d6d6dd"> = </span><span style="color:#f2cc24">(</span></div><div style="position:absolute;left:432.20px;top:505.29px;font-family:'Liberation Mono', monospace;font-size:18.0px;line-height:25.85px;color:#d6d6dd;font-weight:400;white-space:pre;letter-spacing:-0.420px;-webkit-text-stroke:0.3px;"><span style="color:#d6d6dd">        </span><span style="color:#83d6c5">f</span><span style="color:#d6d6dd">"</span><span style="display:inline-block;width:17.85px"></span><span style="color:#e394dc"> Статистика бота:</span><span style="color:#d6d6dd">\n\n"</span></div><svg style="position:absolute;left:535.50px;top:508.00px" width="18" height="18" viewBox="0 0 20 20"><rect x="2" y="2" width="16" height="16" rx="2" fill="#e8e8e8"/><rect x="4.5" y="9" width="2.6" height="7" fill="#3a9a3a"/><rect x="8.7" y="5" width="2.6" height="11" fill="#2a6ad8"/><rect x="12.9" y="11" width="2.6" height="5" fill="#d83a3a"/></svg><div style="position:absolute;left:432.20px;top:531.15px;font-family:'Liberation Mono', monospace;font-size:18.0px;line-height:25.85px;color:#d6d6dd;font-weight:400;white-space:pre;letter-spacing:-0.420px;-webkit-text-stroke:0.3px;"><span style="color:#d6d6dd">        </span><span style="color:#83d6c5">f</span><span style="color:#d6d6dd">"</span><span style="display:inline-block;width:17.85px"></span><span style="color:#e394dc"> Всего пользователей: {</span><span style="color:#94c1fa">total_users</span><span style="color:#e394dc">}</span><span style="color:#d6d6dd">\n"</span></div><svg style="position:absolute;left:535.50px;top:533.85px" width="18" height="18" viewBox="0 0 20 20"><g fill="#5a8ac6"><circle cx="6.5" cy="7" r="3"/><path d="M1 17 Q1 11 6.5 11 Q12 11 12 17 Z"/><circle cx="13.5" cy="7" r="3"/><path d="M8 17 Q8 11 13.5 11 Q19 11 19 17 Z"/></g></svg><div style="position:absolute;left:432.20px;top:557.00px;font-family:'Liberation Mono', monospace;font-size:18.0px;line-height:25.85px;color:#d6d6dd;font-weight:400;white-space:pre;letter-spacing:-0.420px;-webkit-text-stroke:0.3px;"><span style="color:#d6d6dd">        </span><span style="color:#83d6c5">f</span><span style="color:#d6d6dd">"</span><span style="display:inline-block;width:17.85px"></span><span style="color:#e394dc"> Всего запросов: {</span><span style="color:#94c1fa">total_requests</span><span style="color:#e394dc">}</span><span style="color:#d6d6dd">\n"</span></div><svg style="position:absolute;left:535.50px;top:559.70px" width="18" height="18" viewBox="0 0 20 20"><path d="M10 2.5 C15 2.5 18.5 5.5 18.5 9.5 C18.5 13.5 15 16.5 10 16.5 C8.8 16.5 7.8 16.3 6.8 16 L2.5 18 L3.8 14.3 C2.3 13 1.5 11.3 1.5 9.5 C1.5 5.5 5 2.5 10 2.5 Z" fill="#f0f0f0"/><g fill="#999"><circle cx="6.5" cy="9.5" r="1"/><circle cx="10" cy="9.5" r="1"/><circle cx="13.5" cy="9.5" r="1"/></g></svg><div style="position:absolute;left:432.20px;top:582.85px;font-family:'Liberation Mono', monospace;font-size:18.0px;line-height:25.85px;color:#d6d6dd;font-weight:400;white-space:pre;letter-spacing:-0.420px;-webkit-text-stroke:0.3px;"><span style="color:#d6d6dd">        </span><span style="color:#83d6c5">f</span><span style="color:#d6d6dd">"</span><span style="display:inline-block;width:17.85px"></span><span style="color:#e394dc"> Выручка: {</span><span style="color:#94c1fa">total_revenue</span><span style="color:#e394dc">} звёзд</span><span style="color:#d6d6dd">"</span></div><svg style="position:absolute;left:535.50px;top:585.55px" width="18" height="18" viewBox="0 0 20 20"><polygon points="10.00,1.80 12.35,7.56 18.56,8.02 13.80,12.04 15.29,18.08 10.00,14.80 4.71,18.08 6.20,12.04 1.44,8.02 7.65,7.56" fill="#f5c518" stroke="#e0a010" stroke-width="0.6"/></svg><div style="position:absolute;left:432.20px;top:608.70px;font-family:'Liberation Mono', monospace;font-size:18.0px;line-height:25.85px;color:#d6d6dd;font-weight:400;white-space:pre;letter-spacing:-0.420px;-webkit-text-stroke:0.3px;"><span style="color:#d6d6dd">    </span><span style="color:#f2cc24">)</span></div><div style="position:absolute;left:432.20px;top:634.55px;font-family:'Liberation Mono', monospace;font-size:18.0px;line-height:25.85px;color:#d6d6dd;font-weight:400;white-space:pre;letter-spacing:-0.420px;-webkit-text-stroke:0.3px;"><span style="color:#d6d6dd">    </span><span style="color:#94c1fa">bot</span><span style="color:#d6d6dd">.</span><span style="color:#aa9bf5">reply_to</span><span style="color:#f2cc24">(</span><span style="color:#d6d6dd;font-style:italic">message</span><span style="color:#d6d6dd">, </span><span style="color:#94c1fa">stats_text</span><span style="color:#f2cc24">)</span></div><div style="position:absolute;left:432.20px;top:660.40px;font-family:'Liberation Mono', monospace;font-size:18.0px;line-height:25.85px;color:#d6d6dd;font-weight:400;white-space:pre;letter-spacing:-0.420px;-webkit-text-stroke:0.3px;"></div><div style="position:absolute;left:432.20px;top:686.25px;font-family:'Liberation Mono', monospace;font-size:18.0px;line-height:25.85px;color:#d6d6dd;font-weight:400;white-space:pre;letter-spacing:-0.420px;-webkit-text-stroke:0.3px;"></div><div style="position:absolute;left:432.20px;top:712.10px;font-family:'Liberation Mono', monospace;font-size:18.0px;line-height:25.85px;color:#d6d6dd;font-weight:400;white-space:pre;letter-spacing:-0.420px;-webkit-text-stroke:0.3px;"><span style="color:#efb080">@</span><span style="color:#94c1fa">bot</span><span style="color:#d6d6dd">.</span><span style="color:#a8cc7c">message_handler</span><span style="color:#f2cc24">(</span><span style="color:#d6d6dd;font-style:italic">commands</span><span style="color:#d6d6dd">=</span><span style="color:#e394dc">['give']</span><span style="color:#f2cc24">)</span></div><div style="position:absolute;left:432.20px;top:737.95px;font-family:'Liberation Mono', monospace;font-size:18.0px;line-height:25.85px;color:#d6d6dd;font-weight:400;white-space:pre;letter-spacing:-0.420px;-webkit-text-stroke:0.3px;"><span style="color:#83d6c5">def</span><span style="color:#d6d6dd"> </span><span style="color:#efb080;font-weight:700">give_requests_command</span><span style="color:#f2cc24">(</span><span style="color:#d6d6dd;font-style:italic">message</span><span style="color:#f2cc24">)</span><span style="color:#d6d6dd">:</span></div><div style="position:absolute;left:432.20px;top:762.50px;width:565.00px;height:25.85px;background:#3a1c25;"></div><div style="position:absolute;left:432.20px;top:763.80px;font-family:'Liberation Mono', monospace;font-size:18.0px;line-height:25.85px;color:#d6d6dd;font-weight:400;white-space:pre;letter-spacing:-0.420px;-webkit-text-stroke:0.3px;"><span style="color:#d6d6dd">    </span><span style="color:#cdbfc3">if message.from_user.id != ADMIN_ID:</span></div><div style="position:absolute;left:432.20px;top:788.35px;width:565.00px;height:25.85px;background:#1e362a;"></div><div style="position:absolute;left:432.20px;top:789.65px;font-family:'Liberation Mono', monospace;font-size:18.0px;line-height:25.85px;color:#d6d6dd;font-weight:400;white-space:pre;letter-spacing:-0.420px;-webkit-text-stroke:0.3px;"><span style="color:#d6d6dd">    </span><span style="color:#e394dc">"""Обработчик команды /give – начинает процесс начисления запросов"""</span></div><div style="position:absolute;left:432.20px;top:814.20px;width:565.00px;height:25.85px;background:#1e362a;"></div><div style="position:absolute;left:432.20px;top:815.50px;font-family:'Liberation Mono', monospace;font-size:18.0px;line-height:25.85px;color:#d6d6dd;font-weight:400;white-space:pre;letter-spacing:-0.420px;-webkit-text-stroke:0.3px;"><span style="color:#d6d6dd">    </span><span style="color:#83d6c5;font-style:italic">if</span><span style="color:#d6d6dd"> </span><span style="color:#83d6c5">not</span><span style="color:#d6d6dd"> </span><span style="color:#ebc88d">is_admin</span><span style="color:#f2cc24">(</span><span style="color:#d6d6dd;font-style:italic">message</span><span style="color:#d6d6dd">.from_user.id</span><span style="color:#f2cc24">)</span><span style="color:#d6d6dd">:</span></div><div style="position:absolute;left:432.20px;top:841.35px;font-family:'Liberation Mono', monospace;font-size:18.0px;line-height:25.85px;color:#d6d6dd;font-weight:400;white-space:pre;letter-spacing:-0.420px;-webkit-text-stroke:0.3px;"><span style="color:#d6d6dd">        </span><span style="color:#94c1fa">bot</span><span style="color:#d6d6dd">.</span><span style="color:#aa9bf5">reply_to</span><span style="color:#f2cc24">(</span><span style="color:#d6d6dd;font-style:italic">message</span><span style="color:#d6d6dd">, </span><span style="color:#e394dc">"</span><span style="display:inline-block;width:17.85px"></span><span style="color:#e394dc"> У вас нет прав на выполнение этой команды"</span><span style="color:#f2cc24">)</span></div><svg style="position:absolute;left:753.48px;top:844.05px" width="18" height="18" viewBox="0 0 20 20"><circle cx="10" cy="10" r="8.5" fill="#e0243a"/><rect x="4.5" y="8.2" width="11" height="3.6" rx="0.8" fill="#fff"/></svg><div style="position:absolute;left:432.20px;top:867.20px;font-family:'Liberation Mono', monospace;font-size:18.0px;line-height:25.85px;color:#d6d6dd;font-weight:400;white-space:pre;letter-spacing:-0.420px;-webkit-text-stroke:0.3px;"><span style="color:#d6d6dd">        </span><span style="color:#83d6c5;font-style:italic">return</span></div><div style="position:absolute;left:432.20px;top:893.05px;font-family:'Liberation Mono', monospace;font-size:18.0px;line-height:25.85px;color:#d6d6dd;font-weight:400;white-space:pre;letter-spacing:-0.420px;-webkit-text-stroke:0.3px;"></div><div style="position:absolute;left:432.20px;top:918.90px;font-family:'Liberation Mono', monospace;font-size:18.0px;line-height:25.85px;color:#d6d6dd;font-weight:400;white-space:pre;letter-spacing:-0.420px;-webkit-text-stroke:0.3px;"><span style="color:#d6d6dd">    </span><span style="color:#94c1fa">bot</span><span style="color:#d6d6dd">.</span><span style="color:#aa9bf5">send_message</span><span style="color:#f2cc24">(</span><span style="color:#d6d6dd;font-style:italic">message</span><span style="color:#d6d6dd">.chat.id, </span><span style="color:#e394dc">"</span><span style="display:inline-block;width:17.85px"></span><span style="color:#e394dc"> Введите Telegram ID пользователя:"</span><span style="color:#f2cc24">)</span></div><svg style="position:absolute;left:836.52px;top:921.60px" width="18" height="18" viewBox="0 0 20 20"><g fill="#5a8ac6"><circle cx="10" cy="6.5" r="4"/><path d="M2.5 18 Q2.5 11.5 10 11.5 Q17.5 11.5 17.5 18 Z"/></g></svg><div style="position:absolute;left:432.20px;top:944.75px;font-family:'Liberation Mono', monospace;font-size:18.0px;line-height:25.85px;color:#d6d6dd;font-weight:400;white-space:pre;letter-spacing:-0.420px;-webkit-text-stroke:0.3px;"><span style="color:#d6d6dd">    </span><span style="color:#94c1fa">bot</span><span style="color:#d6d6dd">.</span><span style="color:#aa9bf5">register_next_step_handler</span><span style="color:#f2cc24">(</span><span style="color:#d6d6dd;font-style:italic">message</span><span style="color:#d6d6dd">, </span><span style="color:#ebc88d">process_give_user_id</span><span style="color:#f2cc24">)</span></div><div style="position:absolute;left:432.20px;top:970.60px;font-family:'Liberation Mono', monospace;font-size:18.0px;line-height:25.85px;color:#d6d6dd;font-weight:400;white-space:pre;letter-spacing:-0.420px;-webkit-text-stroke:0.3px;"></div><div style="position:absolute;left:432.20px;top:996.45px;font-family:'Liberation Mono', monospace;font-size:18.0px;line-height:25.85px;color:#d6d6dd;font-weight:400;white-space:pre;letter-spacing:-0.420px;-webkit-text-stroke:0.3px;"></div><div style="position:absolute;left:432.20px;top:1022.30px;font-family:'Liberation Mono', monospace;font-size:18.0px;line-height:25.85px;color:#d6d6dd;font-weight:400;white-space:pre;letter-spacing:-0.420px;-webkit-text-stroke:0.3px;"><span style="color:#83d6c5">def</span><span style="color:#d6d6dd"> </span><span style="color:#efb080;font-weight:700">process_give_user_id</span><span style="color:#f2cc24">(</span><span style="color:#d6d6dd;font-style:italic">message</span><span style="color:#f2cc24">)</span><span style="color:#d6d6dd">:</span></div><div style="position:absolute;left:432.20px;top:1046.85px;width:565.00px;height:25.85px;background:#1e362a;"></div><div style="position:absolute;left:432.20px;top:1048.14px;font-family:'Liberation Mono', monospace;font-size:18.0px;line-height:25.85px;color:#d6d6dd;font-weight:400;white-space:pre;letter-spacing:-0.420px;-webkit-text-stroke:0.3px;"><span style="color:#d6d6dd">    </span><span style="color:#e394dc">"""Обрабатывает введённый ID пользователя для начисления запросов"""</span></div><div style="position:absolute;left:432.20px;top:1074.00px;font-family:'Liberation Mono', monospace;font-size:18.0px;line-height:25.85px;color:#d6d6dd;font-weight:400;white-space:pre;letter-spacing:-0.420px;-webkit-text-stroke:0.3px;"><span style="color:#d6d6dd">    </span><span style="color:#83d6c5;font-style:italic">try</span><span style="color:#d6d6dd">:</span></div><div style="position:absolute;left:432.20px;top:1099.85px;font-family:'Liberation Mono', monospace;font-size:18.0px;line-height:25.85px;color:#d6d6dd;font-weight:400;white-space:pre;letter-spacing:-0.420px;-webkit-text-stroke:0.3px;"><span style="color:#d6d6dd">        </span><span style="color:#94c1fa">user_id</span><span style="color:#d6d6dd"> = </span><span style="color:#ebc88d">int</span><span style="color:#f2cc24">(</span><span style="color:#d6d6dd;font-style:italic">message</span><span style="color:#d6d6dd">.text.</span><span style="color:#aa9bf5">strip</span><span style="color:#da70d6">()</span><span style="color:#f2cc24">)</span></div><div style="position:absolute;left:432.20px;top:1125.70px;font-family:'Liberation Mono', monospace;font-size:18.0px;line-height:25.85px;color:#d6d6dd;font-weight:400;white-space:pre;letter-spacing:-0.420px;-webkit-text-stroke:0.3px;"><span style="color:#d6d6dd">        </span><span style="color:#94c1fa">bot</span><span style="color:#d6d6dd">.</span><span style="color:#aa9bf5">send_message</span><span style="color:#f2cc24">(</span></div><div style="position:absolute;left:432.20px;top:1151.55px;font-family:'Liberation Mono', monospace;font-size:18.0px;line-height:25.85px;color:#d6d6dd;font-weight:400;white-space:pre;letter-spacing:-0.420px;-webkit-text-stroke:0.3px;"><span style="color:#d6d6dd">            </span><span style="color:#d6d6dd;font-style:italic">message</span><span style="color:#d6d6dd">.chat.id,</span></div></div><div style="position:absolute;left:338.20px;top:201.00px;width:658.80px;height:25.50px;background:#191919;"></div><div style="position:absolute;left:364.50px;top:202.39px;font-family:'Liberation Mono', monospace;font-size:18.0px;line-height:25.85px;color:#5e5e5e;font-weight:400;white-space:pre;letter-spacing:-0.420px;-webkit-text-stroke:0.3px">270</div><div style="position:absolute;left:432.20px;top:202.39px;font-family:'Liberation Mono', monospace;font-size:18.0px;line-height:25.85px;color:#d6d6dd;font-weight:400;white-space:pre;letter-spacing:-0.420px;-webkit-text-stroke:0.3px;"><span style="color:#83d6c5">def</span><span style="color:#d6d6dd"> </span><span style="color:#efb080;font-weight:700">show_stats</span><span style="color:#f2cc24">(</span><span style="color:#d6d6dd;font-style:italic">message</span><span style="color:#f2cc24">)</span><span style="color:#d6d6dd">:</span></div><div style="position:absolute;left:997.20px;top:201.00px;width:6.80px;height:971.40px;background:#151515;"></div><div style="position:absolute;left:997.20px;top:210.00px;width:6.80px;height:9.50px;background:#3fa76a;"></div><div style="position:absolute;left:997.20px;top:245.00px;width:6.80px;height:87.00px;background:#3fa76a;"></div><div style="position:absolute;left:997.20px;top:347.30px;width:6.80px;height:9.00px;background:#3fa76a;"></div><div style="position:absolute;left:997.20px;top:376.20px;width:6.80px;height:19.20px;background:#3fa76a;"></div><div style="position:absolute;left:997.20px;top:399.50px;width:6.80px;height:37.80px;background:#3fa76a;"></div><div style="position:absolute;left:997.20px;top:439.40px;width:6.80px;height:8.90px;background:#3fa76a;"></div><div style="position:absolute;left:997.20px;top:449.70px;width:6.80px;height:9.60px;background:#3fa76a;"></div><div style="position:absolute;left:997.20px;top:466.20px;width:6.80px;height:12.30px;background:#3fa76a;"></div><div style="position:absolute;left:997.20px;top:480.00px;width:6.80px;height:18.50px;background:#3fa76a;"></div><div style="position:absolute;left:997.20px;top:506.70px;width:6.80px;height:13.70px;background:#3fa76a;"></div><div style="position:absolute;left:997.20px;top:534.20px;width:6.80px;height:8.90px;background:#3fa76a;"></div><div style="position:absolute;left:997.20px;top:557.60px;width:6.80px;height:8.90px;background:#3fa76a;"></div><div style="position:absolute;left:997.20px;top:570.00px;width:6.80px;height:8.90px;background:#3fa76a;"></div><div style="position:absolute;left:997.20px;top:584.30px;width:6.80px;height:33.70px;background:#3fa76a;"></div><div style="position:absolute;left:997.20px;top:631.00px;width:6.80px;height:33.00px;background:#3fa76a;"></div><div style="position:absolute;left:997.20px;top:669.50px;width:6.80px;height:17.20px;background:#3fa76a;"></div><div style="position:absolute;left:997.20px;top:693.70px;width:6.80px;height:68.70px;background:#3fa76a;"></div><div style="position:absolute;left:997.20px;top:792.60px;width:6.80px;height:21.40px;background:#3fa76a;"></div><div style="position:absolute;left:997.20px;top:815.30px;width:6.80px;height:7.70px;background:#3fa76a;"></div><div style="position:absolute;left:997.20px;top:825.60px;width:6.80px;height:8.20px;background:#3fa76a;"></div><div style="position:absolute;left:997.20px;top:838.00px;width:6.80px;height:52.50px;background:#3fa76a;"></div><div style="position:absolute;left:997.20px;top:894.00px;width:6.80px;height:45.30px;background:#3fa76a;"></div><div style="position:absolute;left:997.20px;top:940.30px;width:6.80px;height:10.70px;background:#3fa76a;"></div><div style="position:absolute;left:997.20px;top:952.40px;width:6.80px;height:77.80px;background:#3fa76a;"></div><div style="position:absolute;left:997.20px;top:1033.70px;width:6.80px;height:42.50px;background:#3fa76a;"></div><div style="position:absolute;left:997.20px;top:1077.60px;width:6.80px;height:8.30px;background:#3fa76a;"></div><div style="position:absolute;left:997.20px;top:1103.70px;width:6.80px;height:28.20px;background:#3fa76a;"></div><div style="position:absolute;left:997.20px;top:219.50px;width:6.80px;height:25.50px;background:#7d907f;"></div><div style="position:absolute;left:997.20px;top:762.40px;width:6.80px;height:15.10px;background:#7d907f;"></div><div style="position:absolute;left:997.20px;top:780.30px;width:6.80px;height:9.70px;background:#7d907f;"></div><div style="position:absolute;left:997.20px;top:203.00px;width:6.80px;height:7.00px;background:#e3b06f;"></div><div style="position:absolute;left:984.00px;top:201.00px;width:19.00px;height:2.70px;background:#c8c8c8;"></div><div style="position:absolute;left:1004.50px;top:104.00px;width:1.00px;height:1068.40px;background:#121212;"></div><div style="position:absolute;left:522.80px;top:1097.20px;width:295.20px;height:48.00px;background:#151515;border:1px solid #2c2c2c;border-radius:10px;box-shadow:0 2px 10px rgba(0,0,0,0.5)"></div><svg style="position:absolute;left:541.00px;top:1114.00px;" width="16" height="12" viewBox="0 0 16 12"><path d="M3 8.5 L8 3.5 L13 8.5" stroke="#9a9a9a" stroke-width="1.4" fill="none" stroke-linecap="round"/></svg><div style="position:absolute;left:569.50px;top:1108.53px;font-family:'Liberation Sans', sans-serif;font-size:18.5px;line-height:26px;color:#9a9a9a;font-weight:400;white-space:pre;letter-spacing:0.132px;">31 / 98</div><svg style="position:absolute;left:639.50px;top:1114.00px;" width="16" height="12" viewBox="0 0 16 12"><path d="M3 3.5 L8 8.5 L13 3.5" stroke="#9a9a9a" stroke-width="1.4" fill="none" stroke-linecap="round"/></svg><div style="position:absolute;left:691.70px;top:1107.30px;width:52.30px;height:28.70px;background:#161616;border:1px solid #242424;border-radius:6px"></div><div style="position:absolute;left:696.50px;top:1109.20px;font-family:'Liberation Sans', sans-serif;font-size:18px;line-height:25px;color:#9a9a9a;font-weight:400;white-space:pre;letter-spacing:0.042px;">Undo</div><div style="position:absolute;left:756.50px;top:1107.30px;width:52.50px;height:28.70px;background:#4e6073;border-radius:6px"></div><div style="position:absolute;left:763.70px;top:1109.88px;font-family:'Liberation Sans', sans-serif;font-size:17.5px;line-height:24px;color:#1b2634;font-weight:400;white-space:pre;letter-spacing:-0.319px;">Keep</div><div style="position:absolute;left:1022.00px;top:114.70px;width:287.00px;height:30.30px;background:#232323;border-radius:6px"></div><div style="position:absolute;left:1031.30px;top:118.71px;font-family:'Liberation Sans', sans-serif;font-size:17.4px;line-height:24px;color:#d8d8d8;font-weight:400;white-space:pre;letter-spacing:0.612px;-webkit-text-stroke:0.4px #d8d8d8">Простое объяснение кода бота</div><svg style="position:absolute;left:1800.00px;top:120.00px;" width="22" height="22" viewBox="0 0 22 22"><path d="M11 3 V19 M3 11 H19" stroke="#9a9a9a" stroke-width="1.6" stroke-linecap="round"/></svg><svg style="position:absolute;left:1839.50px;top:119.50px;" width="22" height="22" viewBox="0 0 22 22"><g stroke="#9a9a9a" stroke-width="1.6" fill="none" stroke-linecap="round"><circle cx="11" cy="11" r="8.3"/><path d="M11 6 V11 L14 13"/></g></svg><svg style="position:absolute;left:1878.50px;top:122.00px;" width="24" height="16" viewBox="0 0 24 16"><g fill="#9a9a9a"><circle cx="4" cy="8" r="1.7"/><circle cx="12" cy="8" r="1.7"/><circle cx="20" cy="8" r="1.7"/></g></svg><div style="position:absolute;left:1034.80px;top:265.92px;font-family:'Liberation Sans', sans-serif;font-size:18.8px;line-height:26px;color:#3a3a3a;font-weight:400;white-space:pre;letter-spacing:0.381px;">Улучшаю код: упрощаю, добавляю комментарии и исправляю проблемы, сохраняя</div><div style="position:absolute;left:1020.70px;top:156.00px;width:883.30px;height:121.60px;background:#1a1a1a;border:1px solid #2c2c2c;border-radius:10px"></div><div style="position:absolute;left:1033.00px;top:166.72px;font-family:'Liberation Sans', sans-serif;font-size:18.8px;line-height:26px;color:#cdcdcd;font-weight:400;white-space:pre;letter-spacing:0.368px;">Улучши этот код, не меняя то, что он делает. Сделай его проще и понятнее: убери</div><div style="position:absolute;left:1033.00px;top:194.42px;font-family:'Liberation Sans', sans-serif;font-size:18.8px;line-height:26px;color:#cdcdcd;font-weight:400;white-space:pre;letter-spacing:0.463px;">лишнее, упрости сложные места, добавь комментарии.</div><div style="position:absolute;left:1033.00px;top:222.22px;font-family:'Liberation Sans', sans-serif;font-size:18.8px;line-height:26px;color:#cdcdcd;font-weight:400;white-space:pre;letter-spacing:0.497px;">Покажи улучшенный код целиком. После этого объясни простым языком, что именно ты</div><div style="position:absolute;left:0;top:0;width:1999px;height:1310px;clip-path:inset(252px 0 1042px 0)"><div style="position:absolute;left:1033.00px;top:250.42px;font-family:'Liberation Sans', sans-serif;font-size:18.8px;line-height:26px;color:#555555;font-weight:400;white-space:pre;letter-spacing:0.452px;-webkit-mask-image:linear-gradient(to bottom, rgba(0,0,0,0) 40%, rgba(0,0,0,1) 72%)">изменил и почему это лучше</div></div><svg style="position:absolute;left:1866.00px;top:244.00px;" width="22" height="20" viewBox="0 0 22 20"><g stroke="#9a9a9a" stroke-width="1.5" fill="none" stroke-linecap="round" stroke-linejoin="round"><path d="M7 3.5 L3 7.5 L7 11.5"/><path d="M3 7.5 H13 Q18.5 7.5 18.5 12.5 Q18.5 17 13 17 H10"/></g></svg><div style="position:absolute;left:1034.80px;top:293.22px;font-family:'Liberation Sans', sans-serif;font-size:18.8px;line-height:26px;color:#d9d9d9;font-weight:400;white-space:pre;letter-spacing:0.312px;">функциональность.</div><div style="position:absolute;left:1034.80px;top:332.20px;font-family:'Liberation Sans', sans-serif;font-size:18px;line-height:25px;color:#8a8a8a;font-weight:400;white-space:pre;">Read <span style="color:#6a6a6a">bot.py</span></div><div style="position:absolute;left:1034.80px;top:371.12px;font-family:'Liberation Sans', sans-serif;font-size:18.8px;line-height:26px;color:#d9d9d9;font-weight:400;white-space:pre;letter-spacing:0.450px;">Создаю улучшенную версию кода:</div><div style="position:absolute;left:1031.60px;top:413.00px;width:861.00px;height:194.70px;background:#161616;border:1px solid #262626;border-radius:10px"></div><div style="position:absolute;left:1032.60px;top:453.20px;width:859.00px;height:1.00px;background:#262626;"></div><svg style="position:absolute;left:1044.80px;top:425.50px" width="16" height="16" viewBox="1.6 1 12.8 14"><g fill="#5aa3d2" stroke="#5aa3d2" stroke-width="0.5"><path d="M7.9 1C4.8 1 5 2.4 5 2.4V3.9h3v.5H3.8S1.8 4.2 1.8 7.3c0 3.1 1.8 3 1.8 3h1.1V8.8s-.1-1.8 1.8-1.8h3s1.7 0 1.7-1.7V2.6S11.4 1 7.9 1z"/><path d="M8.1 15c3.1 0 2.9-1.4 2.9-1.4v-1.5H8v-.5h4.2s2 .2 2-2.9-1.8-3-1.8-3h-1.1v1.5s.1 1.8-1.8 1.8h-3s-1.7 0-1.7 1.7v2.7S4.6 15 8.1 15z"/></g><circle cx="6.3" cy="2.4" r="0.55" fill="#141414"/><circle cx="9.7" cy="13.6" r="0.55" fill="#141414"/></svg><div style="position:absolute;left:1073.00px;top:421.02px;font-family:'Liberation Sans', sans-serif;font-size:18.5px;line-height:26px;color:#9a9a9a;font-weight:400;white-space:pre;letter-spacing:0.082px;">bot.py</div><div style="position:absolute;left:1133.00px;top:421.02px;font-family:'Liberation Sans', sans-serif;font-size:18.5px;line-height:26px;color:#71b37a;font-weight:400;white-space:pre;letter-spacing:0.257px;">+257</div><div style="position:absolute;left:1180.00px;top:421.02px;font-family:'Liberation Sans', sans-serif;font-size:18.5px;line-height:26px;color:#e5717a;font-weight:400;white-space:pre;letter-spacing:1.217px;">-83</div><div style="position:absolute;left:0;top:0;width:1999px;height:1310px;clip-path:inset(454px 0 725.8px 0)"><div style="position:absolute;left:1046.90px;top:465.19px;font-family:'Liberation Mono', monospace;font-size:18.0px;line-height:25.85px;color:#d6d6dd;font-weight:400;white-space:pre;letter-spacing:-0.420px;-webkit-text-stroke:0.3px;"><span style="color:#83d6c5;font-style:italic">from</span><span style="color:#d6d6dd"> telebot </span><span style="color:#83d6c5;font-style:italic">import</span><span style="color:#d6d6dd"> types</span></div><div style="position:absolute;left:1032.60px;top:489.75px;width:859.00px;height:25.85px;background:#1f3a2c;"></div><div style="position:absolute;left:1032.60px;top:489.75px;width:2.20px;height:25.85px;background:#3b7d55;"></div><div style="position:absolute;left:1046.90px;top:491.04px;font-family:'Liberation Mono', monospace;font-size:18.0px;line-height:25.85px;color:#d6d6dd;font-weight:400;white-space:pre;letter-spacing:-0.420px;-webkit-text-stroke:0.3px;"><span style="color:#83d6c5;font-style:italic">import</span><span style="color:#d6d6dd"> telebot.apihelper</span></div><div style="position:absolute;left:1046.90px;top:516.90px;font-family:'Liberation Mono', monospace;font-size:18.0px;line-height:25.85px;color:#d6d6dd;font-weight:400;white-space:pre;letter-spacing:-0.420px;-webkit-text-stroke:0.3px;"></div><div style="position:absolute;left:1032.60px;top:541.45px;width:859.00px;height:25.85px;background:#1f3a2c;"></div><div style="position:absolute;left:1032.60px;top:541.45px;width:2.20px;height:25.85px;background:#3b7d55;"></div><div style="position:absolute;left:1046.90px;top:542.75px;font-family:'Liberation Mono', monospace;font-size:18.0px;line-height:25.85px;color:#d6d6dd;font-weight:400;white-space:pre;letter-spacing:-0.420px;-webkit-text-stroke:0.3px;"><span style="color:#6d8a80;font-style:italic"># Проверка наличия необходимых настроек</span></div><div style="position:absolute;left:1046.90px;top:568.60px;font-family:'Liberation Mono', monospace;font-size:18.0px;line-height:25.85px;color:#d6d6dd;font-weight:400;white-space:pre;letter-spacing:-0.420px;-webkit-text-stroke:0.3px;"><span style="color:#83d6c5;font-style:italic">if</span><span style="color:#d6d6dd"> </span><span style="color:#83d6c5">not</span><span style="color:#d6d6dd"> BOT_TOKEN:</span></div></div><svg style="position:absolute;left:1454.00px;top:588.00px;" width="16" height="12" viewBox="0 0 16 12"><path d="M3 3.5 L8 8.5 L13 3.5" stroke="#6a6a6a" stroke-width="1.4" fill="none" stroke-linecap="round"/></svg><div style="position:absolute;left:1034.80px;top:617.60px;font-family:'Liberation Sans', sans-serif;font-size:18.3px;line-height:26px;color:#8a8a8a;font-weight:400;white-space:pre;">Found 3 errors <span style="color:#6a6a6a">in bot.py</span></div><div style="position:absolute;left:1034.80px;top:655.72px;font-family:'Liberation Sans', sans-serif;font-size:18.8px;line-height:26px;color:#d9d9d9;font-weight:400;white-space:pre;letter-spacing:0.433px;">Предупреждения линтера о</div><div style="position:absolute;left:1292.80px;top:656.00px;width:79.60px;height:28.00px;background:#242424;border-radius:5px"></div><div style="position:absolute;left:1298.50px;top:658.80px;font-family:'Liberation Mono', monospace;font-size:17.3px;line-height:24px;color:#d6d6dd;font-weight:400;white-space:pre;">telebot</div><div style="position:absolute;left:1378.30px;top:655.72px;font-family:'Liberation Sans', sans-serif;font-size:18.8px;line-height:26px;color:#d9d9d9;font-weight:400;white-space:pre;letter-spacing:0.341px;">— это нормально: модуль установлен, но линтер его не</div><div style="position:absolute;left:1034.80px;top:683.62px;font-family:'Liberation Sans', sans-serif;font-size:18.8px;line-height:26px;color:#d9d9d9;font-weight:400;white-space:pre;letter-spacing:0.450px;">видит. Это не ошибки.</div><div style="position:absolute;left:1034.80px;top:739.88px;font-family:'Liberation Sans', sans-serif;font-size:23.2px;line-height:32px;color:#e8e8e8;font-weight:700;white-space:pre;letter-spacing:0.391px;">Что я изменил и почему это лучше</div><div style="position:absolute;left:1034.80px;top:795.36px;font-family:'Liberation Sans', sans-serif;font-size:20.4px;line-height:29px;color:#e8e8e8;font-weight:700;white-space:pre;letter-spacing:0.348px;">1. Добавил константы в начало файла</div><div style="position:absolute;left:1034.80px;top:835.82px;font-family:'Liberation Sans', sans-serif;font-size:18.8px;line-height:26px;color:#d9d9d9;font-weight:400;white-space:pre;letter-spacing:0.377px;">Что изменил:</div><div style="position:absolute;left:1035.00px;top:877.30px;width:853.50px;height:170.00px;background:#181818;border-radius:10px"></div><div style="position:absolute;left:1043.20px;top:887.90px;font-family:'Liberation Mono', monospace;font-size:18.0px;line-height:25.85px;color:#d6d6dd;font-weight:400;white-space:pre;letter-spacing:-0.420px;-webkit-text-stroke:0.3px;"><span style="color:#d6d6dd">MIN_MESSAGE_LENGTH = </span><span style="color:#ebc88d">10</span></div><div style="position:absolute;left:1043.20px;top:913.80px;font-family:'Liberation Mono', monospace;font-size:18.0px;line-height:25.85px;color:#d6d6dd;font-weight:400;white-space:pre;letter-spacing:-0.420px;-webkit-text-stroke:0.3px;"><span style="color:#d6d6dd">MAX_MESSAGE_LENGTH = </span><span style="color:#ebc88d">4000</span></div><div style="position:absolute;left:1043.20px;top:939.70px;font-family:'Liberation Mono', monospace;font-size:18.0px;line-height:25.85px;color:#d6d6dd;font-weight:400;white-space:pre;letter-spacing:-0.420px;-webkit-text-stroke:0.3px;"><span style="color:#d6d6dd">MIN_PURCHASE_AMOUNT = </span><span style="color:#ebc88d">1</span></div><div style="position:absolute;left:1043.20px;top:965.60px;font-family:'Liberation Mono', monospace;font-size:18.0px;line-height:25.85px;color:#d6d6dd;font-weight:400;white-space:pre;letter-spacing:-0.420px;-webkit-text-stroke:0.3px;"><span style="color:#d6d6dd">MAX_PURCHASE_AMOUNT = </span><span style="color:#ebc88d">100</span></div><div style="position:absolute;left:1043.20px;top:991.50px;font-family:'Liberation Mono', monospace;font-size:18.0px;line-height:25.85px;color:#d6d6dd;font-weight:400;white-space:pre;letter-spacing:-0.420px;-webkit-text-stroke:0.3px;"><span style="color:#d6d6dd">PURCHASE_AMOUNTS = </span><span style="color:#d6d6dd">[</span><span style="color:#ebc88d">1</span><span style="color:#d6d6dd">, </span><span style="color:#ebc88d">5</span><span style="color:#d6d6dd">, </span><span style="color:#ebc88d">10</span><span style="color:#d6d6dd">, </span><span style="color:#ebc88d">25</span><span style="color:#d6d6dd">, </span><span style="color:#ebc88d">50</span><span style="color:#d6d6dd">, </span><span style="color:#ebc88d">100</span><span style="color:#d6d6dd">]</span></div><div style="position:absolute;left:1032.80px;top:1020.00px;width:858.00px;height:40.00px;background:#161616;border:1px solid #242424;border-bottom:none;border-radius:8px 8px 0 0"></div><svg style="position:absolute;left:1048.00px;top:1032.00px;" width="14" height="14" viewBox="0 0 14 14"><path d="M5 3 L9.5 7 L5 11" stroke="#8a8a8a" stroke-width="1.3" fill="none" stroke-linecap="round"/></svg><div style="position:absolute;left:1071.40px;top:1027.70px;font-family:'Liberation Sans', sans-serif;font-size:18px;line-height:25px;color:#727272;font-weight:400;white-space:pre;letter-spacing:-0.503px;">1 File</div><div style="position:absolute;left:1687.30px;top:1028.20px;font-family:'Liberation Sans', sans-serif;font-size:18px;line-height:25px;color:#a0a0a0;font-weight:400;white-space:pre;">Undo</div><div style="position:absolute;left:1754.20px;top:1028.20px;font-family:'Liberation Sans', sans-serif;font-size:18px;line-height:25px;color:#a0a0a0;font-weight:400;white-space:pre;">Keep</div><div style="position:absolute;left:1809.70px;top:1025.70px;width:74.30px;height:28.30px;background:#606060;border-radius:6px"></div><div style="position:absolute;left:1818.00px;top:1027.94px;font-family:'Liberation Sans', sans-serif;font-size:17.3px;line-height:24px;color:#e8e8e8;font-weight:400;white-space:pre;">Review</div><div style="position:absolute;left:1020.00px;top:1059.00px;width:883.50px;height:97.80px;background:#1a1a1a;border:1px solid #363636;border-radius:12px"></div><div style="position:absolute;left:1032.50px;top:1072.00px;width:1.60px;height:22.00px;background:#d0d0d0;"></div><div style="position:absolute;left:1033.00px;top:1069.92px;font-family:'Liberation Sans', sans-serif;font-size:18.8px;line-height:26px;color:#4e4e4e;font-weight:400;white-space:pre;letter-spacing:0.290px;">Plan, @ for context, / for commands</div><div style="position:absolute;left:1032.80px;top:1115.80px;width:115.20px;height:28.70px;background:#262626;border-radius:14px"></div><svg style="position:absolute;left:1044.00px;top:1123.00px;" width="24" height="14" viewBox="0 0 24 14"><path d="M12 7 C10 4.6 8.6 2.6 6.1 2.6 A4.4 4.4 0 0 0 6.1 11.4 C8.6 11.4 10 9.4 12 7 C14 4.6 15.4 2.6 17.9 2.6 A4.4 4.4 0 0 1 17.9 11.4 C15.4 11.4 14 9.4 12 7 Z" stroke="#9a9a9a" stroke-width="1.4" fill="none"/></svg><div style="position:absolute;left:1072.80px;top:1118.20px;font-family:'Liberation Sans', sans-serif;font-size:18px;line-height:25px;color:#b0b0b0;font-weight:400;white-space:pre;letter-spacing:0.051px;">Agent</div><svg style="position:absolute;left:1127.00px;top:1125.00px;" width="14" height="12" viewBox="0 0 14 12"><path d="M3 4 L7 8 L11 4" stroke="#8a8a8a" stroke-width="1.3" fill="none" stroke-linecap="round"/></svg><div style="position:absolute;left:1161.00px;top:1118.20px;font-family:'Liberation Sans', sans-serif;font-size:18px;line-height:25px;color:#a0a0a0;font-weight:400;white-space:pre;">Auto</div><svg style="position:absolute;left:1205.00px;top:1125.00px;" width="14" height="12" viewBox="0 0 14 12"><path d="M3 4 L7 8 L11 4" stroke="#8a8a8a" stroke-width="1.3" fill="none" stroke-linecap="round"/></svg><svg style="position:absolute;left:1720.00px;top:1119.00px;" width="23" height="23" viewBox="0 0 23 23"><circle cx="11.5" cy="11.5" r="8.5" stroke="#3a3a3a" stroke-width="2" fill="none"/><path d="M11.5 3 A8.5 8.5 0 0 1 20 11.5" stroke="#9a9a9a" stroke-width="2" fill="none"/></svg><svg style="position:absolute;left:1755.00px;top:1119.00px;" width="23" height="23" viewBox="0 0 23 23"><g stroke="#9a9a9a" stroke-width="1.6" fill="none" stroke-linecap="round"><circle cx="11.5" cy="11.5" r="3.6"/><path d="M15.1 8 V13 Q15.1 16 17.8 16 Q20.5 16 20.5 11.5 A9 9 0 1 0 16 19.3"/></g></svg><svg style="position:absolute;left:1790.00px;top:1119.00px;" width="23" height="23" viewBox="0 0 23 23"><g stroke="#9a9a9a" stroke-width="1.5" fill="none"><circle cx="11.5" cy="11.5" r="8.8"/><ellipse cx="11.5" cy="11.5" rx="3.8" ry="8.8"/><path d="M2.7 11.5 H20.3 M4 7 H19 M4 16 H19"/></g></svg><svg style="position:absolute;left:1825.00px;top:1120.00px;" width="23" height="21" viewBox="0 0 23 21"><g stroke="#9a9a9a" stroke-width="1.5" fill="none"><rect x="2" y="3" width="19" height="15" rx="2"/></g><path d="M3 17 L9 10.5 L13 14.5 L15.5 12 L20 17 Z" fill="#9a9a9a"/><circle cx="16" cy="7.5" r="1.5" fill="#9a9a9a"/></svg><div style="position:absolute;left:1862.30px;top:1115.70px;width:28.80px;height:28.80px;background:#8c8c8c;border-radius:50%"></div><svg style="position:absolute;left:1866.50px;top:1120.50px;" width="20" height="20" viewBox="0 0 20 20"><g fill="#1a1a1a"><rect x="7" y="2" width="6" height="10" rx="3"/></g><g stroke="#1a1a1a" stroke-width="1.5" fill="none" stroke-linecap="round"><path d="M4.5 9.5 Q4.5 15 10 15 Q15.5 15 15.5 9.5"/><path d="M10 15 V18"/></g></svg><div style="position:absolute;left:1907.00px;top:713.00px;width:5.00px;height:58.00px;background:#2a2a2a;border-radius:3px"></div><div style="position:absolute;left:81.00px;top:1172.40px;width:1836.00px;height:1.00px;background:#262626;"></div><svg style="position:absolute;left:97.00px;top:1178.00px;" width="16" height="19" viewBox="0 0 16 19"><g stroke="#777" stroke-width="1.4" fill="none" stroke-linecap="round"><path d="M1.5 7 L7 12 L1.5 17.5"/><path d="M14.5 1.5 L9 6.5 L14.5 11.5"/></g></svg><div style="position:absolute;left:141.00px;top:1174.15px;font-family:'Liberation Sans', sans-serif;font-size:19px;line-height:27px;color:#828282;font-weight:400;white-space:pre;letter-spacing:0.010px;">chatgpt-telegram-bot-master</div><svg style="position:absolute;left:405.00px;top:1178.00px;" width="19" height="19" viewBox="0 0 19 19"><g stroke="#828282" stroke-width="1.3" fill="none" stroke-linecap="round"><circle cx="9.5" cy="9.5" r="8"/><path d="M6.3 6.3 L12.7 12.7 M12.7 6.3 L6.3 12.7"/></g></svg><div style="position:absolute;left:429.50px;top:1175.50px;font-family:'Liberation Sans', sans-serif;font-size:18px;line-height:25px;color:#828282;font-weight:400;white-space:pre;">0</div><svg style="position:absolute;left:445.50px;top:1177.50px;" width="20" height="19" viewBox="0 0 20 19"><g stroke="#828282" stroke-width="1.3" fill="none" stroke-linejoin="round"><path d="M10 2 L18.5 17.5 H1.5 Z"/><path d="M10 7.5 V12.5" stroke-linecap="round"/></g><circle cx="10" cy="15" r="0.9" fill="#828282"/></svg><div style="position:absolute;left:469.80px;top:1175.50px;font-family:'Liberation Sans', sans-serif;font-size:18px;line-height:25px;color:#828282;font-weight:400;white-space:pre;">3</div><div style="position:absolute;left:1353.00px;top:1175.50px;font-family:'Liberation Sans', sans-serif;font-size:18px;line-height:25px;color:#828282;font-weight:400;white-space:pre;letter-spacing:0.028px;">Cursor Tab</div><div style="position:absolute;left:1464.20px;top:1175.50px;font-family:'Liberation Sans', sans-serif;font-size:18px;line-height:25px;color:#828282;font-weight:400;white-space:pre;letter-spacing:-0.024px;">Ln 1, Col 1</div><div style="position:absolute;left:1575.50px;top:1175.50px;font-family:'Liberation Sans', sans-serif;font-size:18px;line-height:25px;color:#828282;font-weight:400;white-space:pre;letter-spacing:-0.062px;">Spaces: 4</div><div style="position:absolute;left:1678.70px;top:1175.50px;font-family:'Liberation Sans', sans-serif;font-size:18px;line-height:25px;color:#828282;font-weight:400;white-space:pre;letter-spacing:0.060px;">UTF-8</div><div style="position:absolute;left:1754.00px;top:1175.50px;font-family:'Liberation Sans', sans-serif;font-size:18px;line-height:25px;color:#828282;font-weight:400;white-space:pre;letter-spacing:-0.858px;">LF</div><div style="position:absolute;left:1796.70px;top:1175.50px;font-family:'Liberation Sans', sans-serif;font-size:18px;line-height:25px;color:#828282;font-weight:400;white-space:pre;letter-spacing:0.159px;">Python</div><svg style="position:absolute;left:1877.00px;top:1177.00px;" width="20" height="21" viewBox="0 0 20 21"><g stroke="#828282" stroke-width="1.4" fill="none" stroke-linejoin="round"><path d="M10 2.5 C6 2.5 4.5 5.5 4.5 9 V13 L2.5 16 H17.5 L15.5 13 V9 C15.5 5.5 14 2.5 10 2.5 Z"/><path d="M8 18.5 C8.5 19.8 11.5 19.8 12 18.5"/></g></svg>
</body></html>
